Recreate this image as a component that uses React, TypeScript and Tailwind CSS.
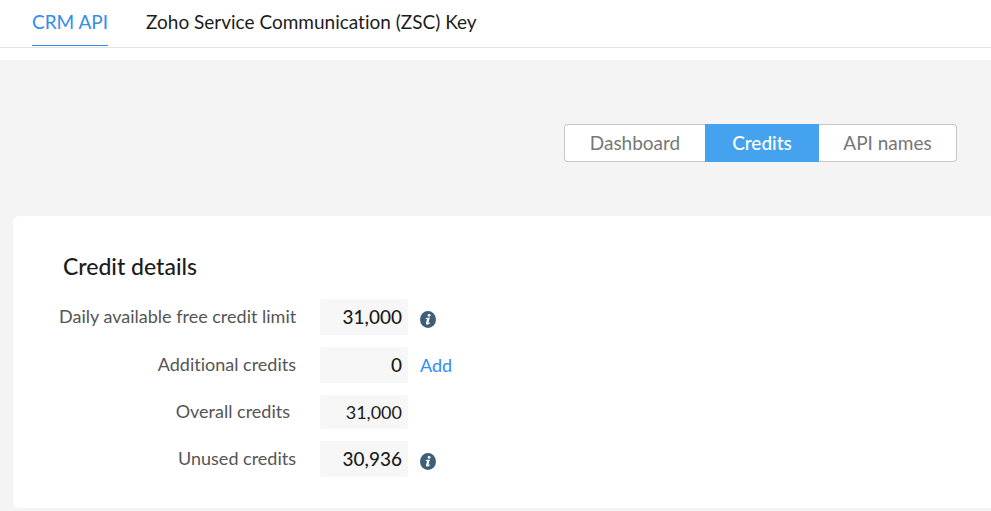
import React from "react";

type Row = {
  label: string;
  value: string;
  total?: boolean;
  extra?: "info" | "add";
};

const rows: Row[] = [
  { label: "Daily available free credit limit", value: "31,000", extra: "info" },
  { label: "Additional credits", value: "0", extra: "add" },
  { label: "Overall credits", value: "31,000", total: true },
  { label: "Unused credits", value: "30,936", extra: "info" },
];

function InfoIcon() {
  return (
    <svg viewBox="0 0 16 17" className="mt-1 h-[17px] w-4" aria-hidden="true">
      <ellipse cx="8" cy="8.5" rx="8" ry="8.5" fill="#3f5f78" />
      <circle cx="9.1" cy="4.3" r="1.4" fill="#fff" />
      <path d="M5.7 6.9L9.8 6.4L8.5 11.7Q8.5 12.3 9.8 11.3L10 12C8.7 13.7 5.7 14.4 6 12.2L7 8L5.6 7.7Z" fill="#fff" />
    </svg>
  );
}

export default function App() {
  return (
    <div className="flex min-h-screen flex-col bg-[#f4f4f4] font-['Lato',sans-serif] text-[#1c1c1c] [font-variant-ligatures:none]">
      <header className="border-b border-[#e3e3e3] bg-white px-8">
        <nav className="flex h-[47px] gap-[38px] text-[19px] leading-[44px] whitespace-nowrap">
          <a href="#crm" className="h-[46px] border-b border-[#338cf0] text-[#338cf0]">CRM API</a>
          <a href="#zsc">Zoho Service Communication (ZSC) Key</a>
        </nav>
      </header>
      <div className="h-3 bg-white" />
      <div className="flex justify-end pt-16 pr-[34px] pb-[54px]">
        <div className="flex h-[38px] text-[19px]">
          <button className="w-[141px] rounded-l border border-r-0 border-[#c8c8c8] bg-white text-[#777]">Dashboard</button>
          <button className="w-[114px] bg-[#44a2ee] font-medium text-white">Credits</button>
          <button className="w-[138px] rounded-r border border-l-0 border-[#c8c8c8] bg-white text-[#777]">API names</button>
        </div>
      </div>
      <main className="mb-[3px] ml-[13px] rounded-l-md bg-white pt-[34px] pb-[31px] pl-[46px]">
        <h1 className="pl-1 text-[23px] leading-8 font-medium">Credit details</h1>
        <dl className="mt-[17px] flex flex-col gap-3">
          {rows.map((r) => (
            <div key={r.label} className="flex items-center">
              <dt className={`w-[237px] pb-0.5 text-right text-lg leading-8 whitespace-nowrap text-[#555] ${r.total ? "pr-1.5" : ""}`}>
                {r.label}
              </dt>
              <dd
                className={`ml-6 w-[88px] rounded-xs bg-[#f7f7f7] pr-1.5 text-right ${
                  r.total ? "h-[34px] text-lg leading-[34px]" : "h-9 text-[19px] leading-9 font-medium"
                }`}
              >
                {r.value}
              </dd>
              {r.extra && (
                <dd className="ml-3 flex items-center">
                  {r.extra === "info" ? (
                    <button aria-label={`About ${r.label}`}>
                      <InfoIcon />
                    </button>
                  ) : (
                    <a href="#add" className="text-lg text-[#338cf0]">Add</a>
                  )}
                </dd>
              )}
            </div>
          ))}
        </dl>
      </main>
    </div>
  );
}
